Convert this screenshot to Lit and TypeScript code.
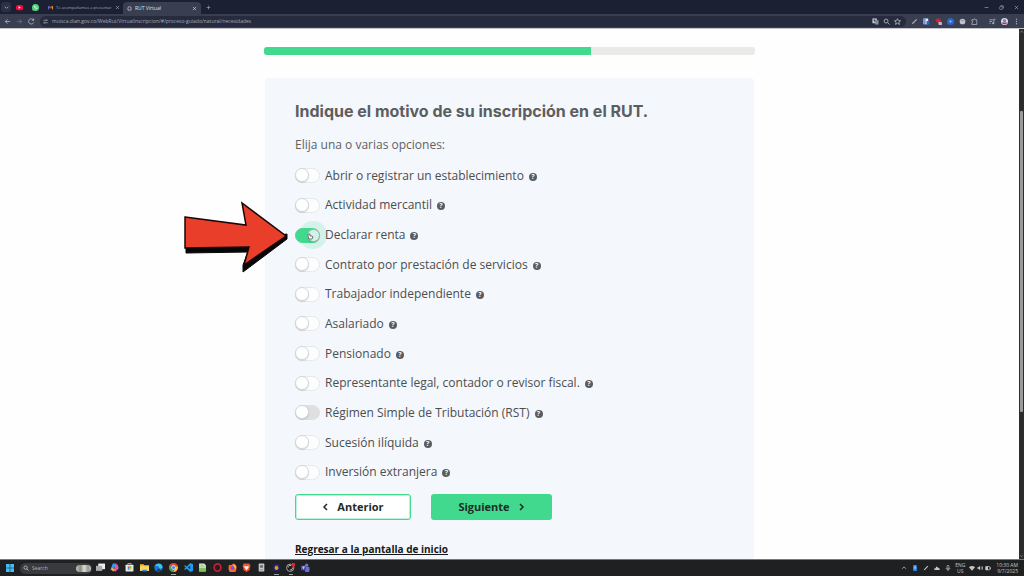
import { LitElement, html, css, svg, nothing } from "lit";
import { customElement, property, state } from "lit/decorators.js";

const glyphs: Record<string, unknown> = {
  chevronDown: svg`<path d="M4 6l4 4 4-4" class="line"/>`,
  chevronUp: svg`<path d="M3 10l5-5 5 5" class="line"/>`,
  youtube: svg`<rect x="0" y="2" width="16" height="12" rx="4" fill="#f5093c"/><path d="M6 5l5 3-5 3z" fill="#fff"/>`,
  whatsapp: svg`<circle cx="8" cy="8" r="8" fill="#4fd67c"/><path d="M1 15l1-5 4 4z" fill="#4fd67c"/><path d="M5 4c-1 3 3 8 7 7l0-2-2-1-1 1-2-2 1-1-1-2z" fill="#e9fff0"/>`,
  gmail: svg`<path d="M2 14V4" stroke="#4285f4" stroke-width="3"/><path d="M2 4l6 5 6-5" fill="none" stroke="#ea4335" stroke-width="3.500"/><path d="M14 4v10" stroke="#f4b72c" stroke-width="3"/>`,
  page: svg`<path d="M3 13V7a5 5 0 0 1 10 0v6z" class="line"/>`,
  close: svg`<path d="M3 3l10 10M13 3L3 13" class="line"/>`,
  plus: svg`<path d="M8 2v12M2 8h12" class="line"/>`,
  minus: svg`<path d="M2 8h12" class="line"/>`,
  restore: svg`<rect x="2" y="5" width="9" height="9" rx="2" class="line"/><path d="M5 2h7a2 2 0 0 1 2 2v7" class="line"/>`,
  back: svg`<path d="M14 8H3M8 3L3 8l5 5" class="line"/>`,
  forward: svg`<path d="M2 8h11M8 3l5 5-5 5" class="line"/>`,
  reload: svg`<path d="M13 10a6 6 0 1 1-1-6" class="line"/><path d="M14 0v6H8z" fill="currentColor"/>`,
  tune: svg`<path d="M1 4h6M12 4h3M1 12h3M9 12h6" class="line"/><circle cx="10" cy="4" r="2" class="line"/><circle cx="6" cy="12" r="2" class="line"/>`,
  translate: svg`<rect x="1" y="1" width="10" height="11" fill="#c8cbd6"/><rect x="7" y="5" width="8" height="10" fill="#888c9c"/><path d="M3 5h5M6 3v6" stroke="#30344a" stroke-width="1.5"/>`,
  magnifier: svg`<circle cx="7" cy="7" r="4.500" class="line"/><path d="M10.500 10.500L15 15" class="line"/>`,
  star: svg`<path d="M8 1.500l2 4.500 5 .5-3.800 3.300 1.200 4.900L8 12l-4.400 2.700 1.200-4.900L1 6.500 6 6z" class="line"/>`,
  pen: svg`<path d="M2 14l3-1 9-9-2-2-9 9z" fill="currentColor"/>`,
  docs: svg`<rect x="1" y="1" width="11" height="13" rx="1" fill="#e8eefc"/><path d="M1 1h5v13H1z" fill="#6b95e8"/><path d="M8 7h7v8H8z" fill="#2f63c8"/>`,
  blocker: svg`<path d="M1 4l4-3h5l4 4-1 6-5 1-5-3z" fill="#cf2432"/><rect x="8" y="9" width="8" height="7" rx="1" fill="#b7bac2"/>`,
  blueDot: svg`<circle cx="8" cy="8" r="8" fill="#2868cf"/><path d="M5 8h6M8 5v6" stroke="#86b4fa" stroke-width="2"/>`,
  grayDot: svg`<circle cx="8" cy="8" r="6.500" fill="#c2c4cc"/><path d="M4 6h8" stroke="#8d909b" stroke-width="2"/>`,
  puzzle: svg`<path d="M2 4h4a2 2 0 0 1 4 0h3v4a2 2 0 0 1 0 3v4H2v-4a2 2 0 0 0 0-4z" class="line"/>`,
  media: svg`<path d="M1 4h8M1 8h6M1 12h3" class="line"/><path d="M11 12V3h4" class="line"/><circle cx="9.500" cy="12" r="2.500" fill="currentColor"/>`,
  avatar: svg`<circle cx="8" cy="8" r="8" fill="#d7dbea"/><path d="M1 10h14a8 8 0 0 1-14 0z" fill="#b72a48"/><circle cx="8" cy="6" r="3.500" fill="#6984bf"/>`,
  dots: svg`<circle cx="8" cy="3" r="1.600"/><circle cx="8" cy="8" r="1.600"/><circle cx="8" cy="13" r="1.600"/>`,
  windows: svg`<path d="M0 0h7.500v7.500H0zM8.500 0H16v7.500H8.500zM0 8.500h7.500V16H0zM8.500 8.500H16V16H8.500z" fill="#45bdf3"/>`,
  taskview: svg`<rect x="4" y="1" width="12" height="10" fill="#eee"/><rect x="0" y="5" width="11" height="9" fill="#aaa"/>`,
  copilot: svg`<path d="M5 1h5l2 5-4 2-4 5-3-2z" fill="#2a9ff0"/><path d="M10 1c4 1 6 7 5 9l-5 5-5-1 4-7z" fill="#e0569b"/><path d="M1 11l4-2 3 3-2 3z" fill="#f2b43c"/>`,
  store: svg`<rect x="1" y="3" width="14" height="12" rx="1" fill="#e5e7e8"/><path d="M5 3V1h6v2" stroke="#bbb" fill="none" stroke-width="1.500"/><path d="M5 6h3v3H5z" fill="#e9563c"/><path d="M8 6h3v3H8z" fill="#6bb53a"/><path d="M5 9h3v3H5z" fill="#2b9be0"/><path d="M8 9h3v3H8z" fill="#f2b32d"/>`,
  folder: svg`<path d="M0 2h6l2 2h8v10H0z" fill="#f4bd32"/><path d="M0 6h16v8H0z" fill="#fbd765"/><path d="M4 12h8v3H4z" fill="#2e83d4"/>`,
  edge: svg`<circle cx="8" cy="8" r="7.500" fill="#1479d4"/><path d="M1 6c3-7 14-6 14 1 0 3-5 4-6 2 0-4-5-5-8-3z" fill="#3fc5dd"/><path d="M9 9c0 3 3 4 5 3-2 4-7 4-9 1z" fill="#173c6b"/>`,
  chrome: svg`<circle cx="8" cy="8" r="8" fill="#e5463a"/><path d="M1 4l5 6 2 6A8 8 0 0 1 1 4z" fill="#38a853"/><path d="M8 16l3-7 4-4a8 8 0 0 1-7 11z" fill="#f7c631"/><circle cx="8" cy="8" r="3.800" fill="#fff"/><circle cx="8" cy="8" r="2.800" fill="#4285f4"/>`,
  vscode: svg`<path d="M11 0l5 2v12l-5 2-6-6-3 2-2-1 3-3-3-3 2-1 3 2zM11 5L7 8l4 3z" fill="#229bea" fill-rule="evenodd"/>`,
  notepad: svg`<path d="M2 1h9l3 3v11H2z" fill="#d9ebcc"/><path d="M2 9h12v6H2z" fill="#7cc44b"/><path d="M4 4h6M4 7h8" stroke="#769367"/>`,
  opera: svg`<ellipse cx="8" cy="8" rx="6" ry="6.500" fill="none" stroke="#c51e36" stroke-width="3"/>`,
  firefox: svg`<path d="M2 3l3 1 5-3c5 2 6 6 5 9a7 7 0 0 1-14 0c0-3 0-5 1-7z" fill="#fa6834"/><circle cx="8" cy="9" r="3.500" fill="#8b4bd8"/><path d="M10 2c4 2 5 5 3 9 0-4-4-5-3-9z" fill="#ffd13d"/>`,
  brave: svg`<path d="M3 1h10l2 4-2 8-5 3-5-3-2-8z" fill="#f4502d"/><path d="M5 5l3 1 3-1 1 2-2 3-2 3-2-3-2-3z" fill="#fff"/>`,
  drive: svg`<rect x="3" y="1" width="10" height="14" rx="1" fill="#c7c9ca"/><circle cx="8" cy="6" r="3" fill="#6f7374"/><path d="M5 12h6" stroke="#666"/>`,
  resolve: svg`<rect x="1" y="1" width="14" height="14" rx="3" fill="#1c2058"/><path d="M5 5a4 4 0 0 1 6 0v3H5z" fill="#3c3fb0"/><circle cx="8" cy="9" r="3.500" fill="#e8952f"/>`,
  obs: svg`<circle cx="7.500" cy="8.500" r="6.500" fill="#191919" stroke="#bbb" stroke-width="1.500"/><path d="M4 8a3 3 0 0 1 5-3M11 8a3 3 0 0 1-4 4" stroke="#ddd" fill="none" stroke-width="1.500"/><circle cx="13" cy="3" r="3.500" fill="#e9202c"/>`,
  teams: svg`<circle cx="10" cy="4" r="3" fill="#6b6fd0"/><path d="M6 7h9v5a4 4 0 0 1-8 2z" fill="#6b6fd0"/><rect x="0" y="5" width="9" height="8" rx="1" fill="#4b4fb5"/><path d="M2 7h5M4.500 7v4" stroke="#d5d7ff" stroke-width="1.500"/>`,
  phone: svg`<rect x="3" y="0" width="10" height="16" rx="2" fill="#2d8cf0"/><path d="M6 4h4v6H6z" fill="#a9d4ff"/>`,
  cloud: svg`<path d="M1 13V8l3 1 2-5 4 2 2 2 3 1v4z" fill="currentColor"/>`,
  mic: svg`<rect x="5.500" y="1" width="5" height="9" rx="2.500" class="line"/><path d="M3 8c0 6 10 6 10 0M8 13v3" class="line"/>`,
  wifi: svg`<path d="M0 6a11 11 0 0 1 16 0l-8 9z" fill="currentColor"/>`,
  volume: svg`<path d="M1 6h3l4-4v12l-4-4H1z" fill="currentColor"/><path d="M10 5c2 2 2 4 0 6M13 3c3 3 3 7 0 10" class="line"/>`,
  battery: svg`<rect x="1" y="4" width="12" height="9" rx="2" class="line"/><path d="M2 4h6v9H2zM14 6h2v5h-2z" fill="currentColor"/>`,
};

@customElement("ui-glyph")
class UiGlyph extends LitElement {
  @property() name = "";
  static styles = css`
    :host { display: inline-flex; width: 8px; height: 8px; flex: none; }
    svg { width: 100%; height: 100%; fill: currentColor; }
    .line { fill: none; stroke: currentColor; stroke-width: 2; }
  `;
  render() {
    return html`<svg viewBox="0 0 16 16" aria-hidden="true">${glyphs[this.name]}</svg>`;
  }
}

const bareButton = css`
  button {
    display: inline-flex; align-items: center; justify-content: center;
    margin: 0; padding: 0; border: 0; background: none; color: inherit; font: inherit;
  }
`;

@customElement("browser-bar")
class BrowserBar extends LitElement {
  static styles = [bareButton, css`
    :host { display: block; flex: none; font-family: "Open Sans", sans-serif; color: #a6aab9; }
    .tabs { display: flex; align-items: center; height: 14px; background: #1b2033; padding-left: 1px; }
    .menu { width: 10px; height: 10px; border-radius: 3px; background: #2c3145; }
    .small { width: 5px; height: 5px; }
    .mid { width: 7px; height: 7px; }
    .pin { width: 16px; }
    .tab { display: flex; align-items: center; gap: 3px; width: 78px; height: 12px; padding: 0 4px; font-size: 4px; box-sizing: border-box; }
    .mail { margin-left: 1px; }
    .active { background: #3a3e51; border-radius: 4px 4px 0 0; color: #dfe2ea; align-self: flex-end; margin-left: 1px; font-size: 5px; }
    .name { flex: 1; white-space: nowrap; }
    .new { width: 14px; }
    .window { display: flex; margin-left: auto; }
    .window button { width: 15px; }
    .tools { display: flex; align-items: center; height: 14px; background: #3a3e51; border-bottom: 1px solid #c4c6cc; }
    .nav { display: flex; padding-left: 1px; }
    .nav button { width: 12px; }
    .off { color: #696d7e; }
    .address { display: flex; flex: 1; align-items: center; gap: 4px; height: 11px; margin-left: 3px; padding: 0 5px 0 3px; border-radius: 6px; background: #272b3e; color: #b0b4c1; }
    .url { flex: 1; min-width: 0; height: 9px; padding: 0; border: 0; outline: 0; background: none; color: inherit; font: 4px/9px "Open Sans", sans-serif; font-size: 4px; }
    .address button { width: 7px; }
    .extensions { display: flex; width: 67px; margin: 0 8px 0 5px; justify-content: space-between; }
    .end { display: flex; gap: 5px; padding: 0 4px 0 3px; }
    .url { font-size: 5px; color: #a4a8b6; }
  `];
  render() {
    const icon = (n: string, label: string, c = "") =>
      html`<button class=${c} aria-label=${label}><ui-glyph class="mid" name=${n}></ui-glyph></button>`;
    return html`
      <div class="tabs">
        <button class="menu" aria-label="Buscar pestañas"><ui-glyph class="mid" name="chevronDown"></ui-glyph></button>
        ${icon("youtube", "YouTube", "pin")}${icon("whatsapp", "WhatsApp", "pin")}
        <div class="tab mail"><ui-glyph class="small" name="gmail"></ui-glyph><span class="name">Te acompañamos a presentar</span>
          <button aria-label="Cerrar"><ui-glyph class="small" name="close"></ui-glyph></button></div>
        <div class="tab active"><ui-glyph class="small" name="page"></ui-glyph><span class="name">RUT Virtual</span>
          <button aria-label="Cerrar"><ui-glyph class="small" name="close"></ui-glyph></button></div>
        <button class="new" aria-label="Nueva pestaña"><ui-glyph class="small" name="plus"></ui-glyph></button>
        <div class="window">
          ${["minus", "restore", "close"].map((n) => html`<button aria-label=${n}><ui-glyph class="small" name=${n}></ui-glyph></button>`)}
        </div>
      </div>
      <div class="tools">
        <div class="nav">${icon("back", "Atrás")}${icon("forward", "Adelante", "off")}${icon("reload", "Recargar")}</div>
        <div class="address">
          <ui-glyph class="small" name="tune"></ui-glyph>
          <input class="url" aria-label="Dirección" value="muisca.dian.gov.co/WebRut/VirtualInscripcion/#/proceso-guiado/natural/necesidades" />
          ${icon("translate", "Traducir")}${icon("magnifier", "Zoom")}${icon("star", "Favorito")}
        </div>
        <div class="extensions">
          ${["pen", "docs", "blocker", "blueDot", "grayDot", "puzzle"].map((n) => icon(n, n))}
        </div>
        <div class="end">${icon("media", "Multimedia")}${icon("avatar", "Perfil")}${icon("dots", "Menú")}</div>
      </div>`;
  }
}

const apps = ["taskview", "copilot", "store", "folder", "edge", "chrome", "vscode", "notepad", "opera", "firefox", "brave", "drive", "resolve", "obs", "teams"];
const running = ["chrome", "resolve", "obs"];

@customElement("task-bar")
class TaskBar extends LitElement {
  static styles = [bareButton, css`
    :host { display: flex; flex: none; align-items: center; height: 16px; background: #1f2022; color: #cfd0d2; border-top: 1px solid #77777b; font-family: "Open Sans", sans-serif; font-size: 5px; }
    .start { width: 20px; }
    .search { display: flex; align-items: center; gap: 3px; width: 72px; height: 11px; padding: 0 1px 0 3px; box-sizing: border-box; border-radius: 6px; background: #393a3d; }
    .field { flex: 1; min-width: 0; padding: 0; border: 0; background: none; font: inherit; color: inherit; outline: 0; }
    .field::placeholder { color: #b5b5b8; opacity: 1; }
    .art { width: 15px; height: 7px; border-radius: 4px; background: linear-gradient(90deg, #b9c4bb, #8b8e84 30%, #e0dacc 55%, #8a9d9c 80%, #c2c5bf); }
    .tiny { width: 6px; height: 6px; }
    .apps { display: grid; grid-auto-flow: column; grid-auto-columns: 1fr; width: 220px; padding-left: 1px; }
    .apps button { height: 14px; border-bottom: 1px solid transparent; }
    .apps ui-glyph { width: 9px; height: 9px; }
    .apps .running { border-image: linear-gradient(90deg, transparent 35%, #9aa0a4 35% 65%, transparent 65%) 1; }
    .tray { display: flex; align-items: center; margin-left: auto; padding-right: 6px; color: #c5c5c8; }
    .tray button { width: 11px; }
    .status button { width: 8px; }
    .status { padding: 0 4px 0 1px; }
    .stack { line-height: 6px; text-align: center; }
    .lang { width: 14px; }
    .clock { text-align: right; }
  `];
  render() {
    const tray = (n: string) => html`<button aria-label=${n}><ui-glyph class="tiny" name=${n}></ui-glyph></button>`;
    return html`
      <button class="start" aria-label="Inicio"><ui-glyph name="windows"></ui-glyph></button>
      <label class="search"><ui-glyph class="tiny" name="magnifier"></ui-glyph>
        <input class="field" aria-label="Search" placeholder="Search" /><span class="art"></span></label>
      <div class="apps">
        ${apps.map((n) => html`<button class=${running.includes(n) ? "running" : ""} aria-label=${n}><ui-glyph name=${n}></ui-glyph></button>`)}
      </div>
      <div class="tray">
        ${["chevronUp", "phone", "pen", "cloud", "mic"].map(tray)}
        <div class="stack lang">ENG<br />US</div>
        <div class="status">${["wifi", "volume", "battery"].map(tray)}</div>
        <div class="stack clock">10:30 AM<br />9/7/2025</div>
      </div>`;
  }
}

interface Reason { label: string; muted?: boolean; pointed?: boolean; }

const reasons: Reason[] = [
  { label: "Abrir o registrar un establecimiento" },
  { label: "Actividad mercantil" },
  { label: "Declarar renta", pointed: true },
  { label: "Contrato por prestación de servicios" },
  { label: "Trabajador independiente" },
  { label: "Asalariado" },
  { label: "Pensionado" },
  { label: "Representante legal, contador o revisor fiscal." },
  { label: "Régimen Simple de Tributación (RST)", muted: true },
  { label: "Sucesión ilíquida" },
  { label: "Inversión extranjera" },
];

@customElement("reason-form")
class ReasonForm extends LitElement {
  @state() private chosen = new Set(["Declarar renta"]);

  static styles = [bareButton, css`
    :host { display: block; width: 48%; min-width: 491px; margin: 0 auto; padding-top: 18px; color: #4b4e51; font-family: "Open Sans", sans-serif; }
    .progress { height: 8px; border-radius: 3px; overflow: hidden; background: #eaeae9; }
    .done { height: 100%; background: #41d98d; }
    .card { margin: 23px 1px 0; padding: 22px 30px 40px; background: #f4f7fb; border-radius: 4px; }
    h1 { margin: 0; font: 700 16px/22px Inter, sans-serif; color: #5b5e61; white-space: nowrap; }
    .hint { margin: 14px 0 7px; font-size: 12px; line-height: 18px; color: #5f6265; }
    .list { display: grid; grid-auto-rows: 1fr; height: 326px; margin: 0; padding: 0; list-style: none; }
    .row { position: relative; display: flex; align-items: center; }
    .switch { appearance: none; display: flex; flex: none; box-sizing: border-box; width: 25px; height: 15px; margin: 0 5px 0 0; border: 1px solid #e6e8eb; border-radius: 8px; background: #fcfdfd; }
    .switch::before { content: ""; box-sizing: border-box; width: 14px; height: 14px; margin: -1px 0 0 -1px; border: 1px solid #d4d6d9; border-radius: 7px; background: #fff; box-shadow: 0 1px 1px #00000022; }
    .switch.muted { background: #dedfe1; border-color: #dedfe1; }
    .switch:checked { justify-content: flex-end; background: #41d98d; border-color: #41d98d; }
    .switch:checked::before { margin: 0 -1px 0 0; width: 13px; height: 13px; background: #d3f2e6; border-color: #9fb9b0; }
    .halo { position: absolute; left: 4px; top: 1px; width: 28px; height: 28px; border-radius: 50%; background: #b8eedb88; }
    .pointed .switch, .pointed label { position: relative; }
    .hand { position: absolute; left: 12px; top: 13px; width: 7px; height: 7px; }
    label { font-size: 12px; line-height: 18px; white-space: nowrap; }
    .help { width: 8px; height: 8px; margin: 2px 0 0 5px; border-radius: 50%; background: #5a5d60; color: #f4f7fb; font: 700 7px/8px "Open Sans", sans-serif; }
    .arrow { position: absolute; right: calc(100% + 7px); top: -19px; width: 104px; height: 72px; }
    .actions { display: flex; gap: 20px; margin-top: 7px; }
    .actions button { box-sizing: border-box; height: 26px; gap: 9px; border-radius: 3px; color: #212b27; font: 700 11px/16px "Open Sans", sans-serif; }
    .actions svg { width: 6px; height: 8px; fill: none; stroke: currentColor; stroke-width: 1.5; }
    .actions .prev { width: 116px; border: 1px solid #41d98d; background: #fff; box-shadow: inset 0 0 0 1px #41d98d55; }
    .actions .next { width: 121px; background: #41d98d; }
    .home { display: inline-block; margin-top: 21px; color: #16181a; font-size: 10px; line-height: 16px; font-weight: 700; text-decoration: underline; }
  `];

  private toggle(label: string) {
    const next = new Set(this.chosen);
    next.has(label) ? next.delete(label) : next.add(label);
    this.chosen = next;
  }

  private row(r: Reason, i: number) {
    return html`<li class="row ${r.pointed ? "pointed" : ""}">
      ${r.pointed ? html`<span class="halo"></span>
        <svg class="arrow" viewBox="0 0 104 72" aria-hidden="true">
          <path d="M2 45L2 52 64 51 59 64V71L103 38V33L60 40z" fill="#070707" stroke="#070707" stroke-linejoin="round"/>
          <path d="M1 16L62 24 58 2 102 35 60 64 65 46 1 47z" fill="#e93f2a" stroke="#170807" stroke-width="1.500"/>
        </svg>` : nothing}
      <input class="switch ${r.muted ? "muted" : ""}" type="checkbox" role="switch" id="reason-${i}"
        .checked=${this.chosen.has(r.label)} @change=${() => this.toggle(r.label)} />
      <label for="reason-${i}">${r.label}</label>
      <button class="help" aria-label="Ayuda: ${r.label}">?</button>
      ${r.pointed ? html`<svg class="hand" viewBox="0 0 7 7" aria-hidden="true"><path d="M2 6L1 3V1h2v2h2l1 1-1 2z" fill="#fff" stroke="#66736e"/></svg>` : nothing}
    </li>`;
  }

  render() {
    return html`
      <div class="progress" role="progressbar" aria-valuenow="67" aria-valuemin="0" aria-valuemax="100"><div class="done" style="width: ${(200 / 3).toFixed(1)}%"></div></div>
      <section class="card">
        <h1>Indique el motivo de su inscripción en el RUT.</h1>
        <p class="hint">Elija una o varias opciones:</p>
        <ul class="list">${reasons.map((r, i) => this.row(r, i))}</ul>
        <div class="actions">
          <button class="prev"><svg viewBox="0 0 6 8"><path d="M5 1L2 4l3 3"/></svg>Anterior</button>
          <button class="next">Siguiente<svg viewBox="0 0 6 8"><path d="M1 1l3 3-3 3"/></svg></button>
        </div>
        <a class="home" href="#inicio">Regresar a la pantalla de inicio</a>
      </section>`;
  }
}

@customElement("app-root")
class AppRoot extends LitElement {
  static styles = css`
    :host { display: flex; flex-direction: column; height: 100vh; overflow: hidden; background: #fefefe; }
    .view { display: flex; flex: 1; min-height: 0; }
    .page { flex: 1; min-width: 0; overflow: hidden; }
    .scroll { display: flex; flex-direction: column; flex: none; width: 5px; background: #2b2c2b; align-items: center; color: #aaa; }
    .scroll ui-glyph { width: 5px; height: 6px; }
    .before { flex: 76; }
    .thumb { flex: 301; width: 3px; border-radius: 1px; background: #9b9b9b; }
    .after { flex: 141; }
  `;
  render() {
    return html`
      <browser-bar></browser-bar>
      <div class="view">
        <main class="page"><reason-form></reason-form></main>
        <div class="scroll"><ui-glyph name="chevronUp"></ui-glyph><span class="before"></span><span class="thumb"></span><span class="after"></span><ui-glyph name="chevronDown"></ui-glyph></div>
      </div>
      <task-bar></task-bar>`;
  }
}
